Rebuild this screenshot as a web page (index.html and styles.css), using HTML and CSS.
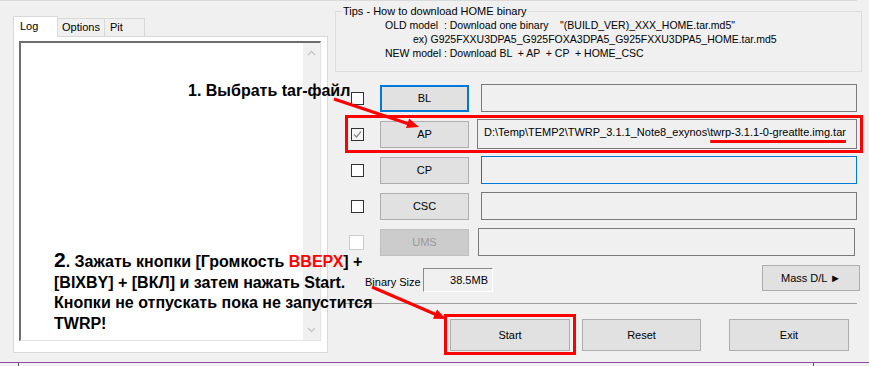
FILE: index.html
```html
<!DOCTYPE html>
<html lang="ru">
<head>
    <meta charset="UTF-8">
    <title>Odin3 - TWRP</title>
    <link rel="stylesheet" href="styles.css">
</head>
<body>
    <div class="topline"></div>
    <div class="window">
        <div class="left-pane">
            <div class="tabs">
                <span class="tab tab-log active">Log</span>
                <span class="tab tab-options">Options</span>
                <span class="tab tab-pit">Pit</span>
            </div>
            <div class="tab-panel">
                <div class="log">
                    <div class="scrollbar">
                        <svg width="9" height="6" viewBox="0 0 9 6"><polyline points="1,5 4.5,1.5 8,5" fill="none" stroke="#c4c4c4" stroke-width="1.3"/></svg>
                        <svg width="9" height="6" viewBox="0 0 9 6"><polyline points="1,1 4.5,4.5 8,1" fill="none" stroke="#c4c4c4" stroke-width="1.3"/></svg>
                    </div>
                </div>
            </div>
        </div>

        <div class="right-pane">
            <fieldset class="tips">
                <legend>Tips - How to download HOME binary</legend>
                <div class="tip-line">OLD model  : Download one binary    "(BUILD_VER)_XXX_HOME.tar.md5"</div>
                <div class="tip-line tip-ex">ex) G925FXXU3DPA5_G925FOXA3DPA5_G925FXXU3DPA5_HOME.tar.md5</div>
                <div class="tip-line">NEW model : Download BL  + AP  + CP  + HOME_CSC</div>
            </fieldset>

            <div class="rows">
                <div class="row">
                    <span class="check"></span>
                    <span class="btn btn-file btn-focus">BL</span>
                    <span class="field"></span>
                </div>
                <div class="row row-marked">
                    <span class="check checked"><svg width="11" height="11" viewBox="0 0 11 11"><polyline points="2,5.5 4.5,8 9,2.5" fill="none" stroke="#8a8a8a" stroke-width="1.2"/></svg></span>
                    <span class="btn btn-file">AP</span>
                    <span class="field field-ap">D:\Temp\TEMP2\TWRP_3.1.1_Note8_exynos\<span class="underlined">twrp-3.1.1-0-greatlte.img.tar</span></span>
                </div>
                <div class="row">
                    <span class="check"></span>
                    <span class="btn btn-file">CP</span>
                    <span class="field field-active"></span>
                </div>
                <div class="row">
                    <span class="check"></span>
                    <span class="btn btn-file">CSC</span>
                    <span class="field"></span>
                </div>
                <div class="row">
                    <span class="check disabled"></span>
                    <span class="btn btn-file btn-disabled">UMS</span>
                    <span class="field field-ums"></span>
                </div>
            </div>

            <div class="bin-row">
                <span class="bin-label">Binary Size</span>
                <span class="bin-box">38.5MB</span>
                <span class="btn btn-mass">Mass D/L ►</span>
            </div>

            <div class="separator"></div>

            <div class="actions">
                <span class="btn btn-action btn-start">Start</span>
                <span class="btn btn-action btn-reset">Reset</span>
                <span class="btn btn-action btn-exit">Exit</span>
            </div>
        </div>
    </div>
    <div class="statusbar">
        <span class="status-cell first"></span>
        <span class="status-cell"></span>
    </div>

    <!-- annotations drawn on top of the screenshot -->
    <div class="note note-1">1. Выбрать tar-файл</div>
    <div class="note note-2"><span class="big">2</span>. Зажать кнопки [Громкость <span class="red">ВВЕРХ</span>] +<br>[BIXBY] + [ВКЛ] и затем нажать Start.<br>Кнопки не отпускать пока не запустится<br>TWRP!</div>
    <svg class="arrows" width="869" height="366" viewBox="0 0 869 366">
        <line x1="334" y1="99" x2="409" y2="124" stroke="#ff0000" stroke-width="3"/>
        <polygon points="419,127 409.2,118.5 406,128" fill="#ff0000"/>
        <line x1="372" y1="287" x2="437" y2="315" stroke="#ff0000" stroke-width="3"/>
        <polygon points="446,319 437,309.6 433,318.8" fill="#ff0000"/>
    </svg>
</body>
</html>
```

FILE: styles.css
```css
body {
    margin: 0;
    width: 869px;
    height: 366px;
    overflow: hidden;
    position: relative;
    background: #f0f0f0;
    font-family: "Liberation Sans", Arial, sans-serif;
    font-size: 11px;
    color: #000;
}
.topline {
    width: 857px;
    height: 1px;
    background: #dadada;
}
.window {
    display: flex;
    height: 361px;
}

/* left: tabs + log */
.left-pane {
    flex: none;
    width: 315px;
    padding: 15px 0 0 13px;
}
.tabs {
    display: flex;
    align-items: flex-end;
    height: 20px;
}
.tab {
    box-sizing: border-box;
    height: 18px;
    border: 1px solid #d9d9d9;
    border-bottom: none;
    border-left: none;
    background: #f0f0f0;
    line-height: 17px;
    padding-left: 4px;
}
.tab.active {
    position: relative;
    z-index: 1;
    height: 21px;
    margin-bottom: -1px;
    background: #fff;
    border-left: 1px solid #d9d9d9;
    padding-left: 6px;
    line-height: 19px;
}
.tab-log { width: 45px; }
.tab-options { width: 47px; }
.tab-pit { width: 40px; padding-left: 5px; }
.tab-panel {
    box-sizing: border-box;
    width: 315px;
    height: 317px;
    border: 1px solid #d9d9d9;
    background: #fff;
    padding: 4px 6px 11px 5px;
}
.log {
    box-sizing: border-box;
    height: 100%;
    display: flex;
    justify-content: flex-end;
    border-style: solid;
    border-width: 2px 1px 1px 2px;
    border-color: #6e6e6e #e3e3e3 #e3e3e3 #6e6e6e;
}
.scrollbar {
    width: 17px;
    background: #f0f0f0;
    display: flex;
    flex-direction: column;
    justify-content: space-between;
    align-items: center;
    padding: 7px 0 7px;
}

/* right: tips + file rows */
.right-pane {
    flex: none;
    width: 527px;
    margin-left: 7px;
}
.tips {
    margin: 3px 0 0;
    padding: 0 0 13px 0;
    border: 1px solid #dcdcdc;
    height: 53px;
}
.tips legend {
    margin-left: 6px;
    padding: 0 1px;
    line-height: 14px;
}
.tip-line {
    white-space: pre;
    padding-left: 49px;
    line-height: 14px;
    font-size: 10.5px;
}
.tip-ex {
    padding-left: 77px;
}
.rows {
    margin: 12px 5px 0 10px;
}
.row {
    position: relative;
    display: flex;
    align-items: center;
    height: 28px;
    margin-bottom: 8px;
}
.row-marked::before {
    content: "";
    position: absolute;
    left: 0;
    top: -5px;
    right: -6px;
    bottom: -5px;
    border: 3px solid #ff0000;
    z-index: 2;
}
.check {
    box-sizing: border-box;
    flex: none;
    width: 13px;
    height: 13px;
    margin: 0 16px 0 6px;
    border: 1px solid #333;
    background: #fff;
    display: flex;
    align-items: center;
    justify-content: center;
}
.check.checked {
    background: #f4f4f4;
}
.check.disabled {
    border-color: #cccccc;
    margin-left: 4px;
    width: 15px;
    height: 15px;
    margin-right: 16px;
}
.btn {
    box-sizing: border-box;
    display: flex;
    align-items: center;
    justify-content: center;
    background: #e1e1e1;
    border: 1px solid #adadad;
}
.btn-file {
    flex: none;
    width: 89px;
    height: 27px;
}
.btn-focus {
    border: 2px solid #0078d7;
}
.btn-disabled {
    background: #cccccc;
    border-color: #bfbfbf;
    color: #9a9a9a;
}
.field {
    box-sizing: border-box;
    flex: 1;
    height: 28px;
    margin-left: 12px;
    border: 1px solid #7a7a7a;
    background: #f0f0f0;
    padding: 0 6px;
    line-height: 26px;
    white-space: nowrap;
    overflow: hidden;
}
.field-ap {
    margin-left: 8px;
    height: 30px;
    line-height: 24px;
    font-size: 11px;
}
.field-active {
    border-color: #0078d7;
}
.field-ums {
    margin-left: 9px;
    margin-right: 2px;
}
.underlined {
    text-decoration: underline #ff0000 3px;
    text-underline-offset: 4px;
}

.bin-row {
    display: flex;
    height: 27px;
    margin: 9px 2px 0 10px;
}
.bin-label {
    align-self: flex-end;
    padding-left: 20px;
    margin-bottom: 4px;
    width: 58px;
    white-space: nowrap;
}
.bin-box {
    box-sizing: border-box;
    align-self: flex-end;
    width: 70px;
    height: 24px;
    border-style: solid;
    border-width: 1px;
    border-color: #8a8a8a #fff #fff #8a8a8a;
    text-align: right;
    padding-right: 4px;
    line-height: 22px;
}
.btn-mass {
    margin-left: auto;
    width: 98px;
    height: 26px;
}
.separator {
    margin: 11px 5px 0 10px;
    border-top: 1px solid #a0a0a0;
}
.actions {
    display: flex;
    margin-top: 15px;
}
.btn-action {
    height: 32px;
    width: 120px;
}
.btn-start {
    position: relative;
    margin-left: 115px;
}
.btn-start::before {
    content: "";
    position: absolute;
    left: -7px;
    top: -6px;
    right: -7px;
    bottom: -5px;
    border: 3px solid #ff0000;
}
.btn-reset {
    margin-left: 12px;
    width: 119px;
}
.btn-exit {
    margin-left: 28px;
}

.statusbar {
    display: flex;
    height: 4px;
    border-top: 1px solid #8e4aa6;
    background: #f0f0f0;
}
.status-cell {
    width: 794px;
    border-right: 1px solid #555;
}
.status-cell.first {
    width: 18px;
}

/* annotations */
.note {
    position: absolute;
    font-weight: bold;
    font-size: 16px;
    line-height: 20px;
    white-space: nowrap;
    z-index: 3;
}
.note-1 {
    left: 188px;
    top: 81px;
}
.note-2 {
    left: 54px;
    top: 252px;
    line-height: 20.7px;
}
.note-2 .big {
    font-size: 21px;
    line-height: 16px;
}
.red {
    color: #ff0000;
}
.arrows {
    position: absolute;
    left: 0;
    top: 0;
    z-index: 4;
    pointer-events: none;
}
```
